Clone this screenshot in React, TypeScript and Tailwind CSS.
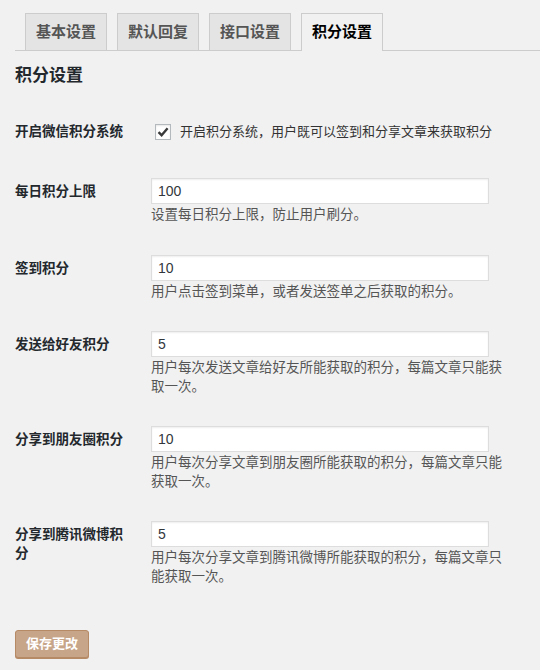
import React from 'react';

const font = { fontFamily: '"Liberation Sans", "Noto Sans CJK SC", sans-serif' };

const tabs = [
  { name: '基本设置', active: false },
  { name: '默认回复', active: false },
  { name: '接口设置', active: false },
  { name: '积分设置', active: true },
];

const rows = [
  { label: '每日积分上限', value: '100', desc: '设置每日积分上限，防止用户刷分。' },
  { label: '签到积分', value: '10', desc: '用户点击签到菜单，或者发送签单之后获取的积分。' },
  { label: '发送给好友积分', value: '5', desc: '用户每次发送文章给好友所能获取的积分，每篇文章只能获取一次。' },
  { label: '分享到朋友圈积分', value: '10', desc: '用户每次分享文章到朋友圈所能获取的积分，每篇文章只能获取一次。' },
  { label: '分享到腾讯微博积分', value: '5', desc: '用户每次分享文章到腾讯微博所能获取的积分，每篇文章只能获取一次。' },
];

export default function App() {
  return (
    <div className="min-h-[670px] bg-[#f1f1f1] pl-[15px] text-[#23282d]" style={font}>
      {/* tabs */}
      <div className="flex items-end gap-[10px] border-b border-[#cccccc] pl-[10px] pt-[13px]">
        {tabs.map(tab =>
          tab.active ? (
            <div
              key={tab.name}
              className="relative mb-[-1px] flex h-[38px] w-[82px] items-center justify-center border border-b-0 border-[#cccccc] bg-[#f1f1f1] pb-[1px] text-[15px] font-semibold text-black"
            >
              {tab.name}
            </div>
          ) : (
            <div
              key={tab.name}
              className="flex h-[37px] w-[82px] items-center justify-center border border-b-0 border-[#cccccc] bg-[#e4e4e4] text-[15px] font-semibold text-[#555555]"
            >
              {tab.name}
            </div>
          )
        )}
      </div>

      <h2 className="mt-[13px] text-[17px] font-semibold leading-[24px]">积分设置</h2>

      {/* checkbox row */}
      <div className="flex items-start pb-[21px] pt-[34px]">
        <div className="w-[136px] pr-[20px] text-[13.5px] font-semibold leading-[20px]">开启微信积分系统</div>
        <div className="flex items-start gap-[9px] pl-[4px]">
          <span className="mt-[2px] flex h-[16px] w-[16px] items-center justify-center border border-[#b4b9be] bg-white shadow-[inset_0_1px_2px_rgba(0,0,0,0.1)]">
            <svg width="12" height="12" viewBox="0 0 12 12">
              <path d="M1.5 6.2 L4.6 9.2 L10.6 2.2" fill="none" stroke="#3a3a3a" strokeWidth="2.4" />
            </svg>
          </span>
          <span className="text-[13px] leading-[20px] text-[#333333]">开启积分系统，用户既可以签到和分享文章来获取积分</span>
        </div>
      </div>

      {rows.map(row => (
        <div key={row.label} className="flex items-start py-[15px]">
          <div className="mt-[4px] w-[136px] pr-[20px] text-[13.5px] font-semibold leading-[19px]">{row.label}</div>
          <div className="flex flex-col">
            <input
              readOnly
              value={row.value}
              className="h-[26px] w-[338px] border border-[#dddddd] bg-white px-[6px] text-[14px] text-[#32373c] shadow-[inset_0_1px_2px_rgba(0,0,0,0.07)] outline-none"
              style={font}
            />
            <p className="mt-[2px] w-[358px] text-[13.5px] leading-[18.5px] text-[#555555]">{row.desc}</p>
          </div>
        </div>
      ))}

      <div className="pt-[29px]">
        <button
          className="h-[28px] rounded-[3px] border border-[#b78a66] bg-[#c7a589] px-[10px] text-[13px] font-semibold text-white shadow-[0_1px_0_#b78a66]"
          style={font}
        >
          保存更改
        </button>
      </div>
    </div>
  );
}
